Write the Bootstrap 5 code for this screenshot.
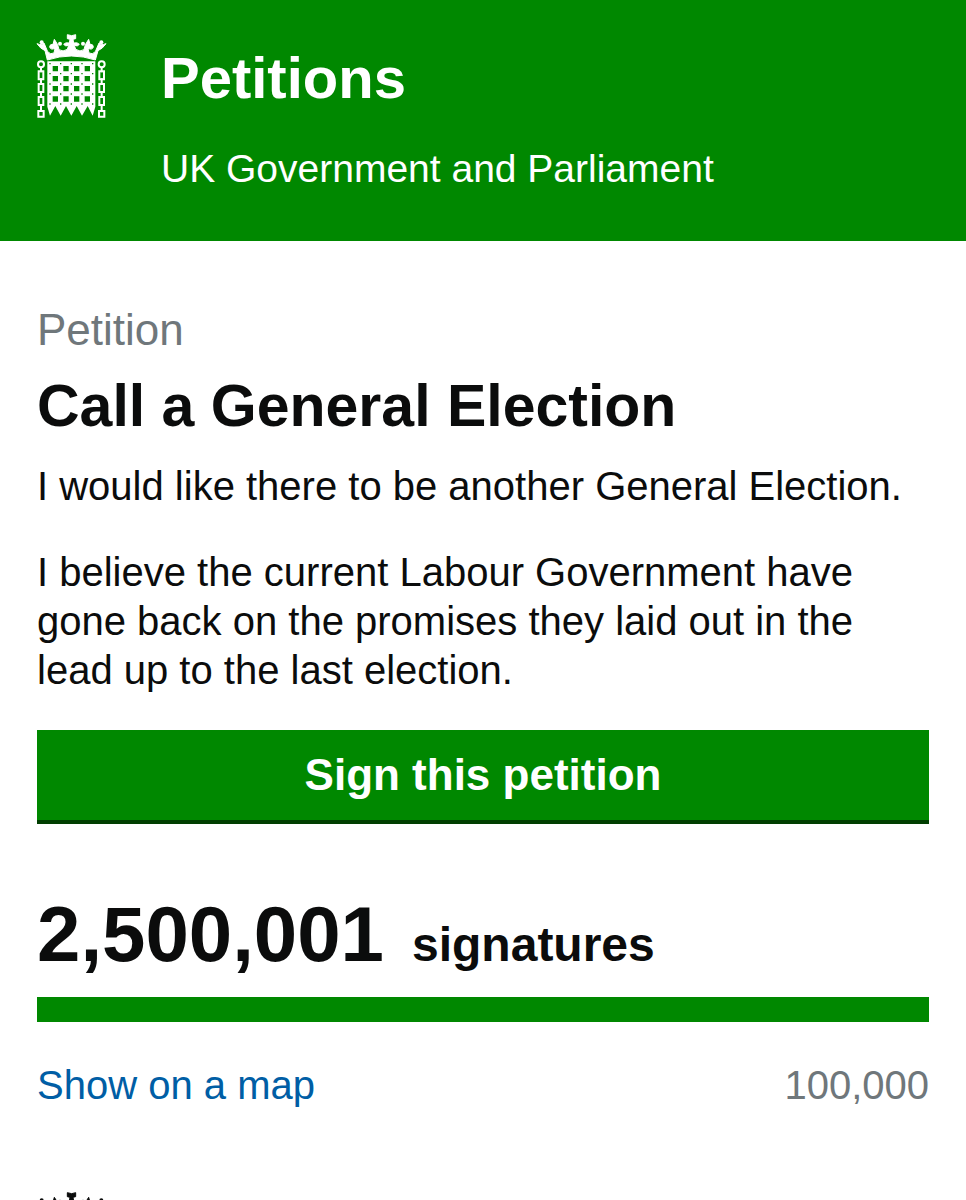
<!DOCTYPE html>
<html lang="en">
<head>
<meta charset="utf-8">
<meta name="viewport" content="width=device-width, initial-scale=1">
<title>Call a General Election - Petitions</title>
<link href="https://cdn.jsdelivr.net/npm/bootstrap@5.3.0/dist/css/bootstrap.min.css" rel="stylesheet">
<style>
  body { font-family: "Liberation Sans", Arial, sans-serif; font-size: 40px; line-height: 49px; color: #0b0c0c; background: #fff; overflow-x: hidden; }
  .gutter { padding-left: 37px; padding-right: 37px; }
  .site-header { background: #008800; color: #fff; padding-top: 28px; padding-bottom: 48px; }
  .brand { gap: 47px; }
  .crest { width: 84px; height: 96px; margin-left: -7px; flex: none; }
  .site-title { font-size: 58px; line-height: 60px; font-weight: 700; margin: 20px 0 36px; }
  .site-title a { color: inherit; }
  .tagline { font-size: 39px; }
  .petition { padding-top: 64px; }
  .kicker { font-size: 44px; }
  .heading { font-size: 59px; line-height: 72px; font-weight: 700; margin: 16px 0 20px; }
  .petition p { margin-bottom: 37px; }
  .petition p:last-of-type { margin-bottom: 35px; }
  .sign { background: #008800; color: #fff; font-size: 44px; line-height: 49px; font-weight: 700; padding: 20px 20px 25px; border: 0; border-radius: 0; box-shadow: inset 0 -4px 0 #003e00; }
  .sign:hover { background: #007300; color: #fff; }
  .count { font-weight: 700; font-size: 48px; line-height: 96px; gap: 28px; margin: 62px 0 4px; }
  .count strong { font-size: 78px; }
  .progress.goal { height: 25px; border-radius: 0; }
  .goal .progress-bar { background: #008800; }
  .goal-row { margin-top: 39px; }
  .map-link { color: #005ea5; }
  .kicker, .target { color: #6f777b; }
  .site-footer { margin-top: 76px; }
</style>
</head>
<body>
<svg class="d-none" aria-hidden="true">
  <symbol id="portcullis" viewBox="0 0 252 288">
    <g fill="currentColor">
      <path stroke="currentColor" stroke-width="3" d="M52 96Q124 72 196 96L204 68Q218 62 228 47Q213 53 207 45L196 71Q188 81 177 75L174 61Q187 67 190 57Q190 48 180 49L176 34L166 50L162 65Q150 73 137 64L133 52Q143 57 148 49Q143 42 131 45L129 34L137 32L137 20L125 23L112 20L112 32L120 34L118 45Q106 42 101 49Q106 57 116 52L112 64Q99 73 87 65L83 50L73 34L69 49Q59 48 59 57Q62 67 75 61L72 75Q61 81 53 71L42 45Q36 53 21 47Q31 62 45 68Z"/>
      <circle cx="35" cy="43" r="6"/><circle cx="214" cy="43" r="6"/><circle cx="90" cy="47" r="6"/><circle cx="159" cy="47" r="6"/>
      <path fill-rule="evenodd" d="M52 100H196V236L188 263L173 234L156 263L140 234L124 263L108 234L92 263L76 234L60 263L52 236Z
        M68 114h16v16h-16zM100 114h16v16h-16zM132 114h16v16h-16zM164 114h16v16h-16z
        M68 144h16v16h-16zM100 144h16v16h-16zM132 144h16v16h-16zM164 144h16v16h-16z
        M68 174h16v16h-16zM100 174h16v16h-16zM132 174h16v16h-16zM164 174h16v16h-16z
        M68 205h16v16h-16zM100 205h16v16h-16zM132 205h16v16h-16zM164 205h16v16h-16z
        M58 105h4v4h-4zM90 105h4v4h-4zM122 105h4v4h-4zM154 105h4v4h-4zM186 105h4v4h-4z
        M58 135h4v4h-4zM90 135h4v4h-4zM122 135h4v4h-4zM154 135h4v4h-4zM186 135h4v4h-4z
        M58 166h4v4h-4zM90 166h4v4h-4zM122 166h4v4h-4zM154 166h4v4h-4zM186 166h4v4h-4z
        M58 196h4v4h-4zM90 196h4v4h-4zM122 196h4v4h-4zM154 196h4v4h-4zM186 196h4v4h-4z
        M58 226h4v4h-4zM90 226h4v4h-4zM122 226h4v4h-4zM154 226h4v4h-4zM186 226h4v4h-4z"/>
    </g>
    <g fill="none" stroke="currentColor" stroke-width="6">
      <circle cx="33" cy="109" r="9"/><circle cx="215" cy="109" r="9"/>
      <path d="M26 130h14v24H26zM26 168h14v24H26zM26 207h14v24H26zM25 249h16v17H25zM208 130h14v24h-14zM208 168h14v24h-14zM208 207h14v24h-14zM207 249h16v17h-16z"/>
      <path d="M33 118v15M33 151v20M33 189v21M33 228v22M215 118v15M215 151v20M215 189v21M215 228v22"/>
    </g>
  </symbol>
</svg>

<header class="site-header gutter">
  <div class="brand d-flex align-items-start">
    <svg class="crest" role="img" aria-label="Portcullis"><use href="#portcullis"/></svg>
    <div>
      <div class="site-title"><a href="#" class="text-decoration-none">Petitions</a></div>
      <div class="tagline">UK Government and Parliament</div>
    </div>
  </div>
</header>

<main class="petition gutter">
  <div class="kicker">Petition</div>
  <h1 class="heading">Call a General Election</h1>
  <p>I would like there to be another General Election.</p>
  <p>I believe the current Labour Government have gone back on the promises they laid out in the lead up to the last election.</p>
  <button type="button" class="btn sign w-100 d-block">Sign this petition</button>
  <div class="count d-flex align-items-baseline"><strong>2,500,001</strong><span>signatures</span></div>
  <div class="progress goal" role="progressbar" aria-label="Signatures" aria-valuenow="100" aria-valuemin="0" aria-valuemax="100">
    <div class="progress-bar w-100"></div>
  </div>
  <div class="goal-row d-flex justify-content-between">
    <a href="#" class="map-link text-decoration-none">Show on a map</a>
    <span class="target">100,000</span>
  </div>
</main>

<footer class="site-footer gutter">
  <svg class="crest d-block" role="img" aria-label="Portcullis"><use href="#portcullis"/></svg>
</footer>
<script src="https://cdn.jsdelivr.net/npm/bootstrap@5.3.0/dist/js/bootstrap.bundle.min.js"></script>
</body>
</html>
